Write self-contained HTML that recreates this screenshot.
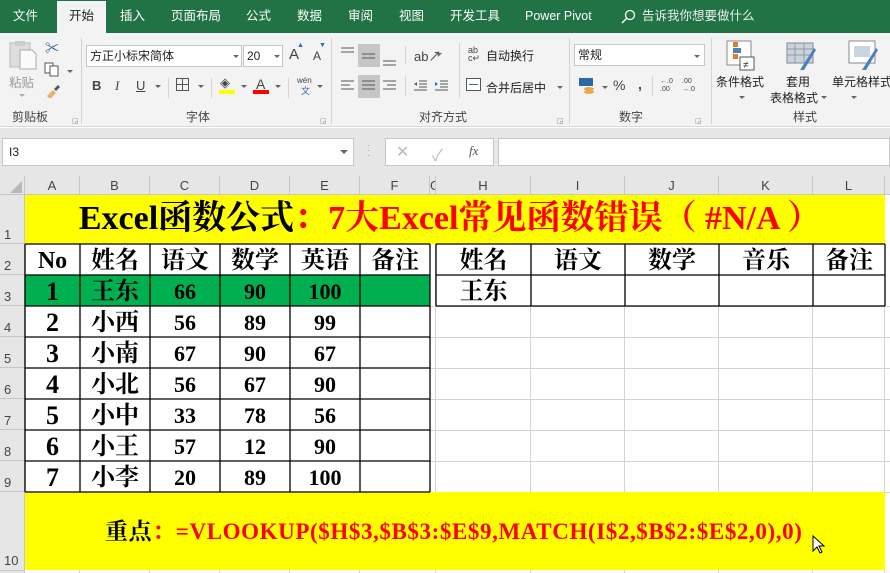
<!DOCTYPE html>
<html><head><meta charset="utf-8"><style>
*{margin:0;padding:0;box-sizing:border-box}
body{width:890px;height:573px;overflow:hidden;background:#fff;font-family:"Liberation Sans","Noto Sans CJK SC",sans-serif;position:relative}
.a{position:absolute}
.tab{position:absolute;top:0;height:33px;line-height:33px;color:#fff;font-size:12.5px}
.rl{color:#444;font-size:12px}
.sep{position:absolute;width:1px;background:#d4d4d4}
.ch{position:absolute;top:176px;height:19px;line-height:19px;text-align:center;font-size:13px;color:#444;border-right:1px solid #c6c6c6}
.rh{position:absolute;left:0;width:25px;font-size:13px;color:#444;border-bottom:1px solid #c6c6c6;padding-left:4px}
.c{position:absolute;text-align:center;font-family:"Liberation Serif","Noto Serif CJK SC",serif;font-weight:bold;font-size:24px;color:#000}
.dd{position:absolute;width:0;height:0;border-left:3px solid transparent;border-right:3px solid transparent;border-top:3px solid #666}
</style></head><body>
<div class="a" style="left:0;top:0;width:890px;height:33px;background:#217346"></div>
<div class="a" style="left:57px;top:1px;width:49px;height:33px;background:#f3f3f3"></div>
<div class="tab" style="left:13px">文件</div>
<div class="tab" style="left:69px;color:#222">开始</div>
<div class="tab" style="left:120px">插入</div>
<div class="tab" style="left:171px">页面布局</div>
<div class="tab" style="left:246px">公式</div>
<div class="tab" style="left:297px">数据</div>
<div class="tab" style="left:348px">审阅</div>
<div class="tab" style="left:399px">视图</div>
<div class="tab" style="left:450px">开发工具</div>
<div class="tab" style="left:525px">Power Pivot</div>
<svg class="a" style="left:620px;top:9px" width="16" height="16"><circle cx="10" cy="6" r="4.5" fill="none" stroke="#fff" stroke-width="1.3"/><line x1="6.5" y1="9.5" x2="2" y2="14" stroke="#fff" stroke-width="1.5"/></svg>
<div class="tab" style="left:642px;color:#e8efe9">告诉我你想要做什么</div>
<div class="a" style="left:0;top:33px;width:890px;height:94px;background:#f3f3f3;border-bottom:1px solid #d9d9d9"></div>
<svg class="a" style="left:8px;top:40px" width="30" height="32"><rect x="2" y="3" width="20" height="24" fill="#ddd" stroke="#bbb"/><rect x="7" y="1" width="10" height="5" fill="#ccc"/><path d="M12 10h12l4 4v15H12z" fill="#fafafa" stroke="#aaa"/></svg>
<div class="a rl" style="left:9px;top:72px;color:#999;font-size:12.5px">粘贴</div>
<div class="dd" style="left:19px;top:94px;border-top-color:#aaa"></div>
<div class="a" style="left:45px;top:38px;color:#2a5a8a;font-size:14px">✂</div>
<svg class="a" style="left:44px;top:62px" width="16" height="15"><rect x="1" y="1" width="8" height="10" fill="#fff" stroke="#555"/><rect x="6" y="4" width="8" height="10" fill="#fff" stroke="#555"/></svg>
<div class="dd" style="left:67px;top:70px"></div>
<svg class="a" style="left:45px;top:84px" width="16" height="14"><path d="M2 12l6-6 3 3-6 6z" fill="#e6b06a"/><path d="M9 5l4-4 2 2-4 4z" fill="#555"/></svg>
<div class="a rl" style="left:12px;top:108px">剪贴板</div>
<div class="sep" style="left:81px;top:38px;height:86px"></div>
<div class="a" style="left:86px;top:45px;width:156px;height:22px;background:#fff;border:1px solid #c6c6c6;font-size:12px;line-height:20px;padding-left:3px;color:#222">方正小标宋简体</div>
<div class="dd" style="left:233px;top:55px"></div>
<div class="a" style="left:243px;top:45px;width:40px;height:22px;background:#fff;border:1px solid #c6c6c6;font-size:12px;line-height:20px;padding-left:3px;color:#222">20</div>
<div class="dd" style="left:274px;top:55px"></div>
<div class="a" style="left:289px;top:46px;font-size:15px;color:#444">A</div><div class="a" style="left:297px;top:42px;font-size:7px;color:#2a6aa8">▲</div>
<div class="a" style="left:313px;top:49px;font-size:12px;color:#444">A</div><div class="a" style="left:319px;top:42px;font-size:7px;color:#2a6aa8">▼</div>
<div class="a" style="left:92px;top:78px;font-size:13px;font-weight:bold;color:#444">B</div>
<div class="a" style="left:115px;top:78px;font-size:13px;font-style:italic;font-family:'Liberation Serif',serif;color:#444">I</div>
<div class="a" style="left:136px;top:78px;font-size:13px;text-decoration:underline;color:#444">U</div>
<div class="dd" style="left:155px;top:85px"></div>
<div class="sep" style="left:168px;top:78px;height:20px"></div>
<svg class="a" style="left:176px;top:78px" width="14" height="14"><rect x=".5" y=".5" width="12" height="12" fill="none" stroke="#555"/><path d="M6.5 0v13M0 6.5h13" stroke="#555"/></svg>
<div class="dd" style="left:198px;top:85px"></div>
<div class="sep" style="left:211px;top:78px;height:20px"></div>
<div class="a" style="left:220px;top:75px;font-size:13px;color:#444">◈</div>
<div class="a" style="left:219px;top:90px;width:16px;height:4px;background:#ff0"></div>
<div class="dd" style="left:241px;top:85px"></div>
<div class="a" style="left:256px;top:76px;font-size:14px;color:#444">A</div>
<div class="a" style="left:253px;top:90px;width:16px;height:4px;background:#f00"></div>
<div class="dd" style="left:275px;top:85px"></div>
<div class="sep" style="left:288px;top:78px;height:20px"></div>
<div class="a" style="left:297px;top:76px;font-size:8px;color:#444">wén</div>
<div class="a" style="left:301px;top:84px;font-size:9px;color:#2a6aa8">文</div>
<div class="dd" style="left:317px;top:85px"></div>
<div class="a rl" style="left:186px;top:108px">字体</div>
<div class="sep" style="left:331px;top:38px;height:86px"></div>
<div class="a" style="left:358px;top:44px;width:22px;height:23px;background:#c6c6c6"></div>
<div class="a" style="left:358px;top:75px;width:22px;height:23px;background:#c6c6c6"></div>
<svg class="a" style="left:338px;top:44px" width="70" height="56" stroke="#555" stroke-width="1"><path d="M3 4h13M3 8h13M24 10h13M24 14h13M45 17h13M45 21h13M3 37h13M3 41h9M3 45h13M24 37h13M24 41h13M24 45h13M45 37h13M49 41h9M45 45h13"/></svg>
<div class="a" style="left:414px;top:46px;font-size:13px;color:#444">ab↗</div><div class="dd" style="left:436px;top:53px"></div>
<div class="sep" style="left:405px;top:46px;height:18px"></div>
<div class="sep" style="left:405px;top:76px;height:20px"></div>
<svg class="a" style="left:413px;top:79px" width="40" height="14"><path d="M6 2h8M6 5h8M6 8h8M1 11h13" stroke="#555"/><path d="M1 5l3-2v4z" fill="#2a6aa8"/><path d="M27 2h8M27 5h8M27 8h8M22 11h13" stroke="#555"/><path d="M22 3l3 2-3 2z" fill="#2a6aa8"/></svg>
<div class="sep" style="left:459px;top:43px;height:55px"></div>
<div class="a" style="left:468px;top:46px;font-size:9px;color:#444;line-height:8px">ab<br>c↵</div>
<div class="a" style="left:486px;top:47px;font-size:12px;color:#222">自动换行</div>
<svg class="a" style="left:466px;top:78px" width="16" height="14"><rect x=".5" y=".5" width="14" height="12" fill="#fff" stroke="#555"/><path d="M3 6.5h9" stroke="#2a6aa8"/></svg>
<div class="a" style="left:486px;top:79px;font-size:12px;color:#222">合并后居中</div>
<div class="dd" style="left:557px;top:86px"></div>
<div class="a rl" style="left:419px;top:108px">对齐方式</div>
<div class="a" style="left:557px;top:117px;font-size:7px;color:#888">◲</div>
<div class="sep" style="left:569px;top:38px;height:86px"></div>
<div class="a" style="left:574px;top:44px;width:131px;height:22px;background:#fff;border:1px solid #c6c6c6;font-size:12px;line-height:20px;padding-left:3px;color:#222">常规</div>
<div class="dd" style="left:694px;top:55px"></div>
<svg class="a" style="left:578px;top:77px" width="20" height="18"><rect x="1" y="1" width="14" height="8" fill="#2a6aa8"/><ellipse cx="11" cy="12" rx="5" ry="2" fill="#e8a84a"/><ellipse cx="11" cy="15" rx="5" ry="2" fill="#e8a84a"/></svg>
<div class="dd" style="left:602px;top:86px"></div>
<div class="a" style="left:613px;top:77px;font-size:14px;color:#444">%</div>
<div class="a" style="left:638px;top:76px;font-size:14px;color:#444;font-weight:bold">,</div>
<div class="sep" style="left:652px;top:76px;height:20px"></div>
<div class="a" style="left:660px;top:78px;font-size:7px;line-height:8px;color:#444">←.0<br>.00</div>
<div class="a" style="left:682px;top:78px;font-size:7px;line-height:8px;color:#444">.00<br>→.0</div>
<div class="a rl" style="left:619px;top:108px">数字</div>
<div class="a" style="left:695px;top:117px;font-size:7px;color:#888">◲</div>
<div class="sep" style="left:711px;top:38px;height:86px"></div>
<svg class="a" style="left:726px;top:40px" width="30" height="32"><rect x="1" y="1" width="24" height="24" fill="#fff" stroke="#888"/><rect x="7" y="2" width="5" height="5" fill="#e07b2a"/><rect x="7" y="8" width="8" height="5" fill="#4a7fc0"/><rect x="7" y="14" width="5" height="5" fill="#e07b2a"/><rect x="14" y="17" width="14" height="13" fill="#fff" stroke="#555"/><text x="17" y="28" font-size="10" fill="#333">≠</text></svg>
<div class="a" style="left:716px;top:73px;font-size:12px;color:#222">条件格式</div>
<div class="dd" style="left:739px;top:96px"></div>
<svg class="a" style="left:786px;top:42px" width="30" height="30"><rect x="1" y="1" width="26" height="20" fill="#c8d4e0" stroke="#888"/><path d="M1 7h26M1 13h26M9 1v20M18 1v20" stroke="#999"/><path d="M14 28l14-22 2 2-12 20z" fill="#4a7fc0"/></svg>
<div class="a" style="left:786px;top:73px;font-size:12px;color:#222">套用</div>
<div class="a" style="left:770px;top:89px;font-size:12px;color:#222">表格格式</div>
<div class="dd" style="left:821px;top:96px"></div>
<svg class="a" style="left:848px;top:40px" width="32" height="32"><rect x="1" y="1" width="26" height="22" fill="#fff" stroke="#888"/><rect x="6" y="6" width="16" height="11" fill="#c8d4e0"/><path d="M14 30l14-22 2 2-12 20z" fill="#4a7fc0"/></svg>
<div class="a" style="left:832px;top:73px;font-size:12px;color:#222;white-space:nowrap">单元格样式</div>
<div class="dd" style="left:851px;top:96px"></div>
<div class="a rl" style="left:793px;top:108px">样式</div>
<div class="a" style="left:72px;top:117px;font-size:7px;color:#888">◲</div>
<div class="a" style="left:320px;top:117px;font-size:7px;color:#888">◲</div>
<div class="a" style="left:0;top:128px;width:890px;height:48px;background:#e6e6e6"></div>
<div class="a" style="left:2px;top:138px;width:352px;height:28px;background:#fff;border:1px solid #c6c6c6;font-size:12px;line-height:26px;padding-left:6px;color:#222">I3</div>
<div class="dd" style="left:340px;top:150px;border-left-width:4px;border-right-width:4px;border-top-width:4px"></div>
<div class="a" style="left:367px;top:143px;font-size:10px;color:#aaa;line-height:5px">·<br>·<br>·</div>
<div class="a" style="left:385px;top:138px;width:109px;height:28px;background:#fff;border:1px solid #c6c6c6"></div>
<div class="a" style="left:396px;top:142px;font-size:16px;color:#bbb">✕</div>
<div class="a" style="left:432px;top:142px;font-size:16px;color:#bbb">✓</div>
<div class="a" style="left:469px;top:143px;font-size:13px;color:#555;font-style:italic;font-family:'Liberation Serif',serif">fx</div>
<div class="a" style="left:498px;top:138px;width:392px;height:28px;background:#fff;border:1px solid #c6c6c6"></div>
<div class="a" style="left:0;top:176px;width:890px;height:19px;background:#e6e6e6;border-bottom:1px solid #c6c6c6"></div>
<div class="a" style="left:10px;top:181px;width:0;height:0;border-left:12px solid transparent;border-bottom:12px solid #b8b8b8"></div>
<div class="ch" style="left:0;width:25px"></div>
<div class="ch" style="left:25px;width:55px">A</div>
<div class="ch" style="left:80px;width:70px">B</div>
<div class="ch" style="left:150px;width:70px">C</div>
<div class="ch" style="left:220px;width:70px">D</div>
<div class="ch" style="left:290px;width:70px">E</div>
<div class="ch" style="left:360px;width:70px">F</div>
<div class="ch" style="left:430px;width:6px;overflow:hidden">G</div>
<div class="ch" style="left:436px;width:95px">H</div>
<div class="ch" style="left:531px;width:94px">I</div>
<div class="ch" style="left:625px;width:94px">J</div>
<div class="ch" style="left:719px;width:94px">K</div>
<div class="ch" style="left:813px;width:72px">L</div>
<div class="a" style="left:0;top:195px;width:25px;height:378px;background:#e6e6e6;border-right:1px solid #c6c6c6"></div>
<div class="rh" style="top:195px;height:49px;padding-top:32px">1</div>
<div class="rh" style="top:244px;height:31px;padding-top:14px">2</div>
<div class="rh" style="top:275px;height:31px;padding-top:14px">3</div>
<div class="rh" style="top:306px;height:31px;padding-top:14px">4</div>
<div class="rh" style="top:337px;height:31px;padding-top:14px">5</div>
<div class="rh" style="top:368px;height:31px;padding-top:14px">6</div>
<div class="rh" style="top:399px;height:31px;padding-top:14px">7</div>
<div class="rh" style="top:430px;height:31px;padding-top:14px">8</div>
<div class="rh" style="top:461px;height:31px;padding-top:14px">9</div>
<div class="rh" style="top:492px;height:79px;padding-top:61px">10</div>
<svg class="a" style="left:25px;top:195px" width="865" height="378">
<g stroke="#d4d4d4" stroke-width="1">
<path d="M0 111.5h865M0 142.5h865M0 173.5h865M0 204.5h865M0 235.5h865M0 266.5h865M0 297.5h865"/>
<path d="M505.5 0v378M599.5 0v378M693.5 0v378M787.5 0v378M859.5 0v378M410.5 0v378M54.5 0v378M124.5 0v378M194.5 0v378M264.5 0v378M334.5 0v378"/>
</g></svg>
<div class="a" style="left:25px;top:195px;width:860px;height:49px;background:#ff0"></div>
<div class="a" style="left:25px;top:492px;width:860px;height:78px;background:#ff0"></div>
<div class="a" style="left:25px;top:244px;width:405px;height:248px;background:#fff"></div>
<div class="a" style="left:25px;top:275px;width:405px;height:31px;background:#00b050"></div>
<svg class="a" style="left:24px;top:243px" width="408" height="251"><g stroke="#000" stroke-width="1.3" fill="none">
<path d="M1 1h405M1 32h405M1 63h405M1 94h405M1 125h405M1 156h405M1 187h405M1 218h405M1 249h405"/>
<path d="M1 1v248M56 1v248M126 1v248M196 1v248M266 1v248M336 1v248M406 1v248"/></g></svg>
<div class="a" style="left:436px;top:244px;width:449px;height:62px;background:#fff"></div>
<svg class="a" style="left:435px;top:243px" width="452" height="65"><g stroke="#000" stroke-width="1.3" fill="none">
<path d="M1 1h449M1 32h449M1 63h449M1 1v62M96 1v62M190 1v62M284 1v62M378 1v62M450 1v62"/></g></svg>
<div class="c" style="left:25px;top:198px;width:860px;font-size:34px;line-height:42px;white-space:nowrap;padding-right:10px">Excel函数公式<span style="color:#f00">：7大Excel常见函数错误（ #N/A ）</span></div>
<div class="c" style="left:25px;top:246px;width:55px;line-height:30px">No</div>
<div class="c" style="left:80px;top:246px;width:70px;line-height:30px">姓名</div>
<div class="c" style="left:150px;top:246px;width:70px;line-height:30px">语文</div>
<div class="c" style="left:220px;top:246px;width:70px;line-height:30px">数学</div>
<div class="c" style="left:290px;top:246px;width:70px;line-height:30px">英语</div>
<div class="c" style="left:360px;top:246px;width:70px;line-height:30px">备注</div>
<div class="c" style="left:436px;top:246px;width:95px;line-height:30px">姓名</div>
<div class="c" style="left:531px;top:246px;width:94px;line-height:30px">语文</div>
<div class="c" style="left:625px;top:246px;width:94px;line-height:30px">数学</div>
<div class="c" style="left:719px;top:246px;width:94px;line-height:30px">音乐</div>
<div class="c" style="left:813px;top:246px;width:72px;line-height:30px">备注</div>
<div class="c" style="left:436px;top:277px;width:95px;line-height:30px">王东</div>
<div class="c" style="left:25px;top:277px;width:55px;line-height:30px;font-size:26px">1</div><div class="c" style="left:80px;top:277px;width:70px;line-height:30px">王东</div><div class="c" style="left:150px;top:277px;width:70px;line-height:30px;font-size:22px">66</div><div class="c" style="left:220px;top:277px;width:70px;line-height:30px;font-size:22px">90</div><div class="c" style="left:290px;top:277px;width:70px;line-height:30px;font-size:22px">100</div>
<div class="c" style="left:25px;top:308px;width:55px;line-height:30px;font-size:26px">2</div><div class="c" style="left:80px;top:308px;width:70px;line-height:30px">小西</div><div class="c" style="left:150px;top:308px;width:70px;line-height:30px;font-size:22px">56</div><div class="c" style="left:220px;top:308px;width:70px;line-height:30px;font-size:22px">89</div><div class="c" style="left:290px;top:308px;width:70px;line-height:30px;font-size:22px">99</div>
<div class="c" style="left:25px;top:339px;width:55px;line-height:30px;font-size:26px">3</div><div class="c" style="left:80px;top:339px;width:70px;line-height:30px">小南</div><div class="c" style="left:150px;top:339px;width:70px;line-height:30px;font-size:22px">67</div><div class="c" style="left:220px;top:339px;width:70px;line-height:30px;font-size:22px">90</div><div class="c" style="left:290px;top:339px;width:70px;line-height:30px;font-size:22px">67</div>
<div class="c" style="left:25px;top:370px;width:55px;line-height:30px;font-size:26px">4</div><div class="c" style="left:80px;top:370px;width:70px;line-height:30px">小北</div><div class="c" style="left:150px;top:370px;width:70px;line-height:30px;font-size:22px">56</div><div class="c" style="left:220px;top:370px;width:70px;line-height:30px;font-size:22px">67</div><div class="c" style="left:290px;top:370px;width:70px;line-height:30px;font-size:22px">90</div>
<div class="c" style="left:25px;top:401px;width:55px;line-height:30px;font-size:26px">5</div><div class="c" style="left:80px;top:401px;width:70px;line-height:30px">小中</div><div class="c" style="left:150px;top:401px;width:70px;line-height:30px;font-size:22px">33</div><div class="c" style="left:220px;top:401px;width:70px;line-height:30px;font-size:22px">78</div><div class="c" style="left:290px;top:401px;width:70px;line-height:30px;font-size:22px">56</div>
<div class="c" style="left:25px;top:432px;width:55px;line-height:30px;font-size:26px">6</div><div class="c" style="left:80px;top:432px;width:70px;line-height:30px">小王</div><div class="c" style="left:150px;top:432px;width:70px;line-height:30px;font-size:22px">57</div><div class="c" style="left:220px;top:432px;width:70px;line-height:30px;font-size:22px">12</div><div class="c" style="left:290px;top:432px;width:70px;line-height:30px;font-size:22px">90</div>
<div class="c" style="left:25px;top:463px;width:55px;line-height:30px;font-size:26px">7</div><div class="c" style="left:80px;top:463px;width:70px;line-height:30px">小李</div><div class="c" style="left:150px;top:463px;width:70px;line-height:30px;font-size:22px">20</div><div class="c" style="left:220px;top:463px;width:70px;line-height:30px;font-size:22px">89</div><div class="c" style="left:290px;top:463px;width:70px;line-height:30px;font-size:22px">100</div>
<div class="c" style="left:105px;top:517px;font-size:23px;line-height:30px;white-space:nowrap;text-align:left;letter-spacing:0.6px">重点<span style="color:#f00">：=VLOOKUP($H$3,$B$3:$E$9,MATCH(I$2,$B$2:$E$2,0),0)</span></div>
<svg class="a" style="left:812px;top:535px" width="14" height="20"><path d="M1 1v15l4-4 3 6 2-1-3-6h5z" fill="#fff" stroke="#000" stroke-width="1"/></svg>
</body></html>
